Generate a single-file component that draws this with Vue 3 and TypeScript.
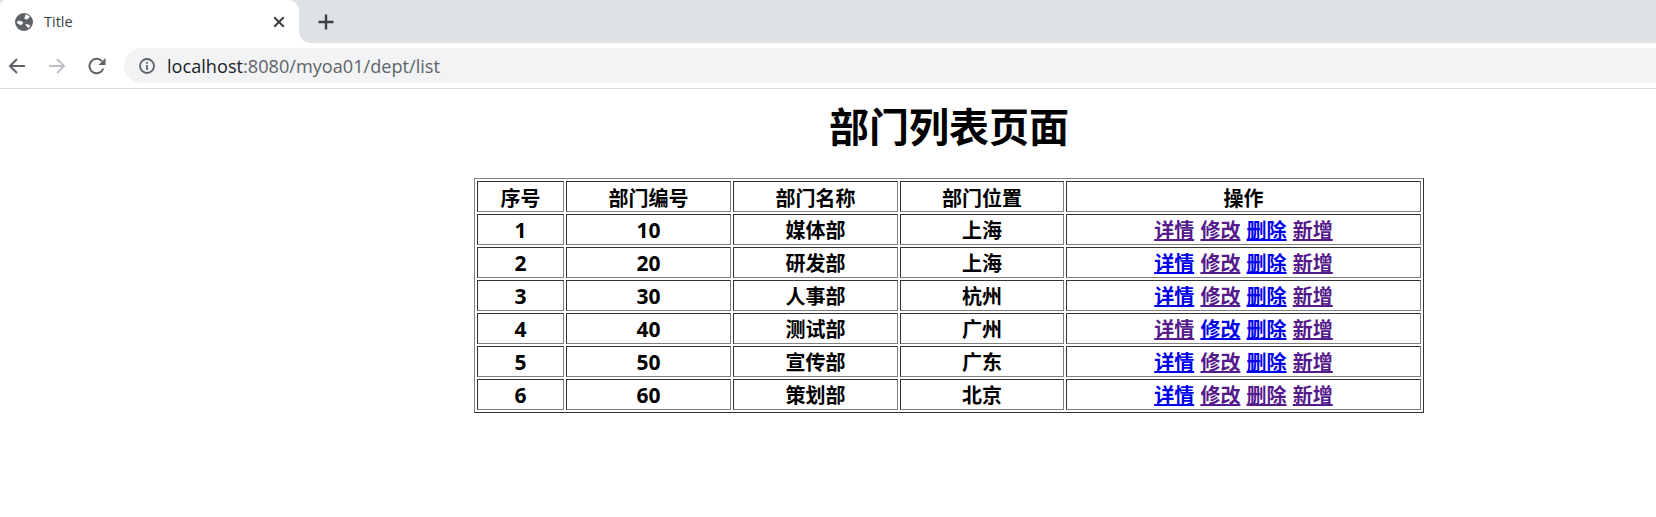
<script setup lang="ts">
interface Row { no: number; code: number; name: string; loc: string; visited: boolean[] }
const heads: string[] = ['序号', '部门编号', '部门名称', '部门位置', '操作']
const actions: string[] = ['详情', '修改', '删除', '新增']
const rows: Row[] = [
  { no: 1, code: 10, name: '媒体部', loc: '上海', visited: [true, true, false, true] },
  { no: 2, code: 20, name: '研发部', loc: '上海', visited: [false, true, false, true] },
  { no: 3, code: 30, name: '人事部', loc: '杭州', visited: [false, true, false, true] },
  { no: 4, code: 40, name: '测试部', loc: '广州', visited: [true, false, false, true] },
  { no: 5, code: 50, name: '宣传部', loc: '广东', visited: [false, true, false, true] },
  { no: 6, code: 60, name: '策划部', loc: '北京', visited: [false, true, true, true] },
]
</script>

<template>
  <div class="window">
    <header class="chrome">
      <div class="strip">
        <div class="tab">
          <svg class="favicon" viewBox="0 0 18 18" width="18" height="18">
            <circle cx="9" cy="9" r="9" fill="#5f6368" />
            <path d="M2 8.4 C4.4 7.2 7 8 8.4 10 L6 12.2 L2.4 10.4 Z M10.6 1.2 L14.8 3.2 C14 5.6 11.6 7 9.4 6 C9.6 4.4 10 2.8 10.6 1.2 Z M10.2 11.4 C12 11.2 14 11.6 15.4 12.8 L13.4 15.6 C12.4 14 11.2 12.8 10.2 11.4 Z" fill="#fff" />
          </svg>
          <span class="tab-title">Title</span>
          <svg class="close" viewBox="0 0 12 12" width="12" height="12">
            <path d="M1.2 1.2 L10.8 10.8 M10.8 1.2 L1.2 10.8" stroke="#3c4043" stroke-width="2" fill="none" />
          </svg>
        </div>
        <svg class="plus" viewBox="0 0 16 16" width="16" height="16">
          <path d="M8 0.5 V15.5 M0.5 8 H15.5" stroke="#3c4043" stroke-width="2.4" fill="none" />
        </svg>
      </div>
      <div class="toolbar">
        <svg class="nav back" viewBox="0 0 18 18" width="18" height="18">
          <path d="M17 9 H2 M9 2 L2 9 L9 16" stroke="#5f6368" stroke-width="2" fill="none" />
        </svg>
        <svg class="nav forward" viewBox="0 0 18 18" width="18" height="18">
          <path d="M1 9 H16 M9 2 L16 9 L9 16" stroke="#bdc1c6" stroke-width="2" fill="none" />
        </svg>
        <svg class="nav reload" viewBox="0 0 18 18" width="18" height="18">
          <path d="M15.4 11.5 A7.2 7.2 0 1 1 14 4.2" stroke="#5f6368" stroke-width="2" fill="none" />
          <path d="M17.5 1 V8 H10.5 Z" fill="#5f6368" />
        </svg>
        <div class="omnibox">
          <svg class="info" viewBox="0 0 16 16" width="16" height="16">
            <circle cx="8" cy="8" r="7" stroke="#5f6368" stroke-width="1.8" fill="none" />
            <path d="M8 7 V12 M8 4 V5.8" stroke="#5f6368" stroke-width="1.8" fill="none" />
          </svg>
          <span class="url"><span class="host">localhost</span>:8080/myoa01/dept/list</span>
        </div>
      </div>
    </header>

    <main class="page">
      <h1 class="heading">部门列表页面</h1>
      <table class="dept">
        <colgroup>
          <col class="c1" /><col class="c2" /><col class="c2" /><col class="c4" /><col class="c5" />
        </colgroup>
        <thead>
          <tr><th v-for="h in heads" :key="h">{{ h }}</th></tr>
        </thead>
        <tbody>
          <tr v-for="r in rows" :key="r.no">
            <td class="num">{{ r.no }}</td>
            <td class="num">{{ r.code }}</td>
            <td>{{ r.name }}</td>
            <td>{{ r.loc }}</td>
            <td class="ops">
              <template v-for="(a, i) in actions" :key="a">
                <a href="#" :class="r.visited[i] ? 'seen' : 'fresh'">{{ a }}</a>{{ ' ' }}
              </template>
            </td>
          </tr>
        </tbody>
      </table>
    </main>
  </div>
</template>

<style scoped>
.window {
  width: 1656px;
  height: 517px;
  overflow: hidden;
  background: #fff;
}
.chrome {
  width: 1656px;
  font-family: "Open Sans", "Noto Sans", sans-serif;
}
.strip {
  height: 43px;
  background: #dee1e6;
  display: flex;
  align-items: center;
}
.tab {
  position: relative;
  box-sizing: border-box;
  width: 299px;
  height: 43px;
  padding: 0 14px 0 15px;
  background: #fff;
  border-radius: 6px 11px 0 0;
  display: flex;
  align-items: center;
}
.tab::after {
  content: "";
  position: absolute;
  left: 100%;
  bottom: 0;
  width: 11px;
  height: 11px;
  background: radial-gradient(circle at 100% 0, transparent 10.5px, #fff 11px);
}
.favicon { flex: none; }
.tab-title {
  margin-left: 11px;
  flex: 1;
  font-size: 14.5px;
  color: #3c4043;
}
.close { flex: none; }
.plus {
  margin-left: 19px;
  flex: none;
}
.toolbar {
  box-sizing: border-box;
  height: 46px;
  padding: 5px 0 5px 8px;
  border-bottom: 1px solid #dadce0;
  display: flex;
  align-items: center;
}
.nav { flex: none; }
.forward { margin-left: 22px; }
.reload { margin-left: 22px; }
.omnibox {
  margin-left: 18px;
  flex: 1;
  height: 35px;
  padding-left: 15px;
  background: #f1f3f4;
  border-radius: 18px 0 0 18px;
  display: flex;
  align-items: center;
}
.info { flex: none; }
.url {
  margin-left: 12px;
  font-size: 18.15px;
  color: #5f6368;
  white-space: nowrap;
}
.host { color: #202124; }

.page {
  width: 1898px;
  font-family: "Open Sans", "Noto Sans CJK SC", sans-serif;
  color: #000;
}
.heading {
  margin: 0;
  padding: 18px 0 31px;
  font-size: 40px;
  line-height: 40px;
  font-weight: 700;
  text-align: center;
}
.dept {
  box-sizing: border-box;
  width: 950px;
  margin: 0 auto;
  table-layout: fixed;
  border-collapse: separate;
  border-spacing: 2px;
  border: 1px solid;
  border-color: #808080 #333 #333 #808080;
  font-size: 20px;
  font-weight: 700;
}
.c1 { width: 87px; }
.c2 { width: 165px; }
.c4 { width: 164px; }
.dept th,
.dept td {
  box-sizing: border-box;
  height: 31px;
  padding: 2px 0 0;
  border: 1px solid;
  border-color: #333 #808080 #808080 #333;
  line-height: 27px;
  text-align: center;
  font-weight: 700;
}
.dept th {
  padding-top: 4px;
  line-height: 25px;
}
.dept .num { font-size: 21px; }
.ops { word-spacing: 1px; }
.fresh { color: #00e; }
.seen { color: #551a8b; }
</style>
